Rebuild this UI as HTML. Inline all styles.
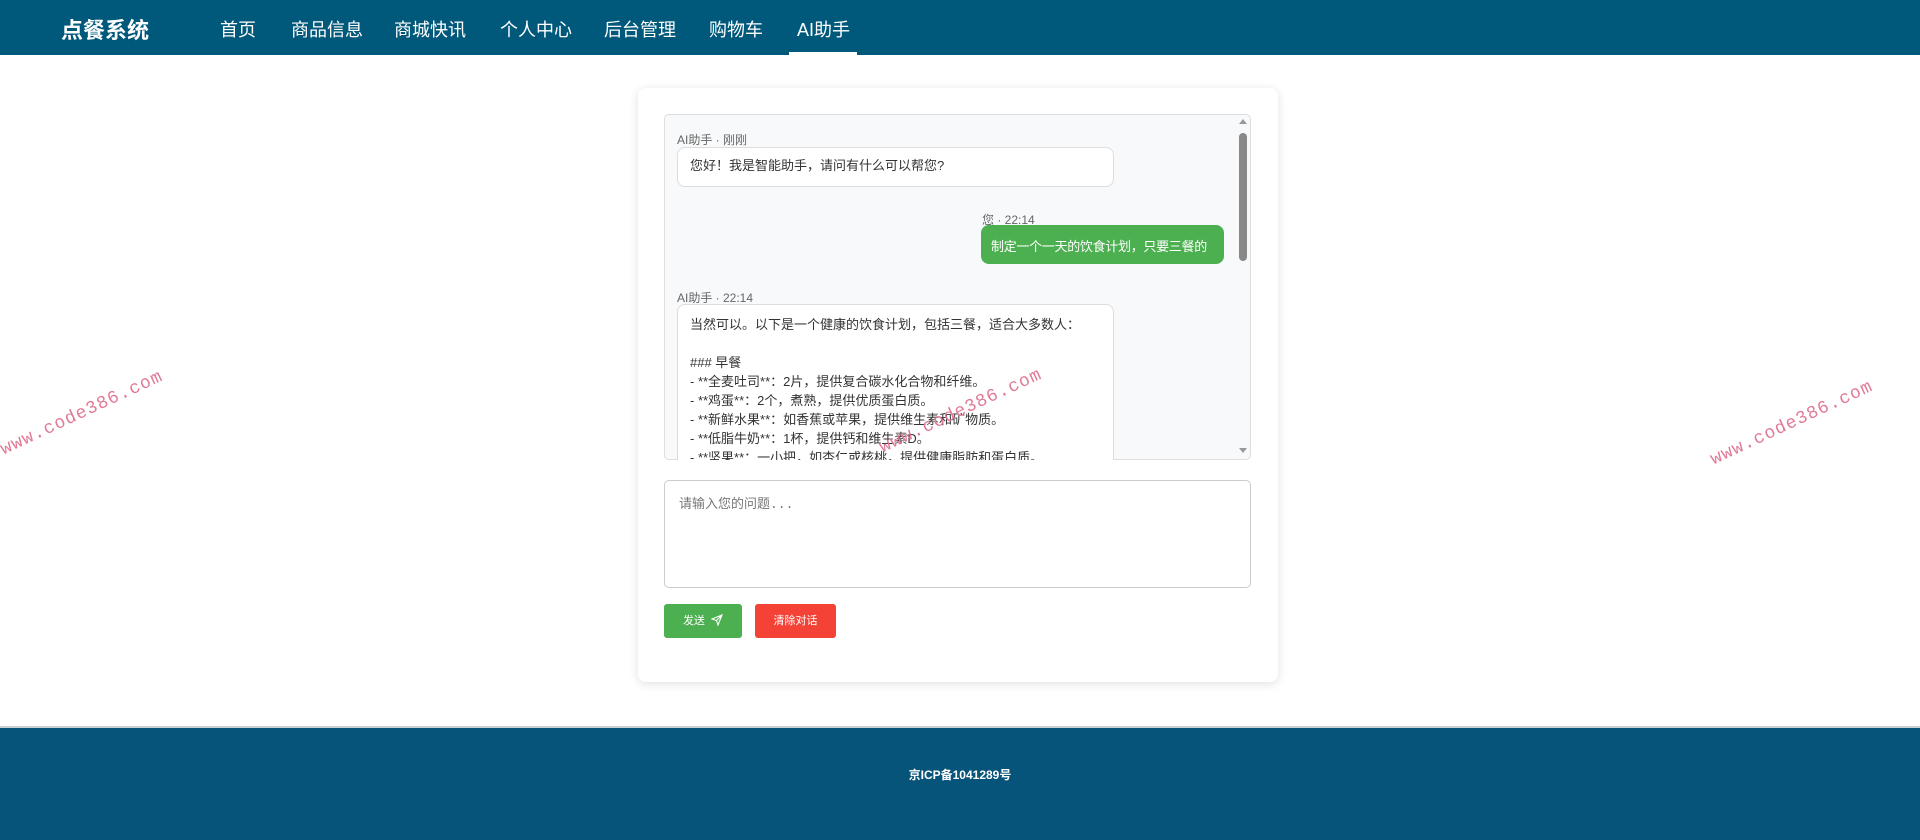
<!DOCTYPE html>
<html><head><meta charset="utf-8"><style>
*{box-sizing:border-box;margin:0;padding:0}
body{width:1920px;height:840px;overflow:hidden;background:#fff;font-family:"Liberation Sans","Noto Sans CJK SC",sans-serif;position:relative}
.nav{position:absolute;left:0;top:0;width:1920px;height:55px;background:#00587a}
.brand{position:absolute;left:61px;top:13px;color:#fff;font-size:22px;font-weight:bold}
.nav a{position:absolute;top:16px;color:#fff;font-size:18px;text-decoration:none}
.ul{position:absolute;left:789px;top:52px;width:68px;height:3px;background:#fff}
.card{position:absolute;left:638px;top:88px;width:640px;height:594px;background:#fff;border-radius:8px;box-shadow:0 2px 10px rgba(0,0,0,.12)}
.chat{position:absolute;left:664px;top:114px;width:587px;height:346px;background:#f8f9fa;border:1px solid #ddd;border-radius:5px;overflow:hidden}
.lbl{position:absolute;font-size:12px;color:#666}
.b{position:absolute;background:#fff;border:1px solid #ddd;border-radius:8px;font-size:13px;color:#333;padding:10px 12px;line-height:19px;white-space:pre}
.g{position:absolute;background:#4caf50;color:#fff;border-radius:8px;font-size:13px;padding:11px 10px;white-space:nowrap;letter-spacing:-.3px}
.sb{position:absolute;left:1239px;top:133px;width:8px;height:128px;background:#888;border-radius:4px}
.ta{position:absolute;left:664px;top:480px;width:587px;height:108px;border:1px solid #ccc;border-radius:5px;padding:12px 14px;font-family:"Liberation Mono","Noto Sans CJK SC",monospace;font-size:13px;color:#777}
.btn{position:absolute;top:604px;height:34px;border-radius:3px;color:#fff;font-size:11px;line-height:34px;text-align:center}
.foot{position:absolute;left:0;top:726px;width:1920px;height:114px;background:#07547a;border-top:2px solid #c8d0d4}
.foot div{text-align:center;color:#fff;font-weight:bold;font-size:12px;margin-top:38px}
.wm{position:absolute;color:#e07a96;font-family:"Liberation Mono",monospace;font-size:18px;transform:rotate(-25deg);transform-origin:left bottom;letter-spacing:1px}
</style></head><body>
<div class="nav">
<div class="brand">点餐系统</div>
<a style="left:220px">首页</a><a style="left:291px">商品信息</a><a style="left:394px">商城快讯</a><a style="left:500px">个人中心</a><a style="left:604px">后台管理</a><a style="left:709px">购物车</a><a style="left:797px">AI助手</a>
<div class="ul"></div>
</div>
<div class="card"></div>
<div class="chat"></div>
<div class="lbl" style="left:677px;top:131px">AI助手 · 刚刚</div>
<div class="b" style="left:677px;top:147px;width:437px;height:40px;padding:8px 12px">您好！我是智能助手，请问有什么可以帮您?</div>
<div class="lbl" style="left:982px;top:211px">您 · 22:14</div>
<div class="g" style="left:981px;top:225px;width:243px;height:39px">制定一个一天的饮食计划，只要三餐的</div>
<div class="lbl" style="left:677px;top:289px">AI助手 · 22:14</div>
<div style="position:absolute;left:664px;top:114px;width:587px;height:346px;overflow:hidden">
<div class="b" style="left:13px;top:190px;width:437px;height:200px">当然可以。以下是一个健康的饮食计划，包括三餐，适合大多数人：

### 早餐
- **全麦吐司**：2片，提供复合碳水化合物和纤维。
- **鸡蛋**：2个，煮熟，提供优质蛋白质。
- **新鲜水果**：如香蕉或苹果，提供维生素和矿物质。
- **低脂牛奶**：1杯，提供钙和维生素D。
- **坚果**：一小把，如杏仁或核桃，提供健康脂肪和蛋白质。</div>
</div>
<div class="sb"></div>
<div style="position:absolute;left:1239px;top:119px;width:0;height:0;border-left:4px solid transparent;border-right:4px solid transparent;border-bottom:5px solid #999"></div>
<div style="position:absolute;left:1239px;top:448px;width:0;height:0;border-left:4px solid transparent;border-right:4px solid transparent;border-top:5px solid #999"></div>
<div class="ta">请输入您的问题...</div>
<div class="btn" style="left:664px;width:78px;background:#4caf50">发送 &nbsp;<svg width="12" height="12" viewBox="0 0 12 12" style="vertical-align:-2px"><path d="M1 5 L11 1 L7 11 L5.5 6.5 Z M5.5 6.5 L11 1" fill="none" stroke="#fff" stroke-width="1.1"/></svg></div>
<div class="btn" style="left:755px;width:81px;background:#f44336">清除对话</div>
<div class="foot"><div>京ICP备1041289号</div></div>
<div class="wm" style="left:6px;top:440px">www.code386.com</div>
<div class="wm" style="left:885px;top:438px">www.code386.com</div>
<div class="wm" style="left:1716px;top:450px">www.code386.com</div>
</body></html>
